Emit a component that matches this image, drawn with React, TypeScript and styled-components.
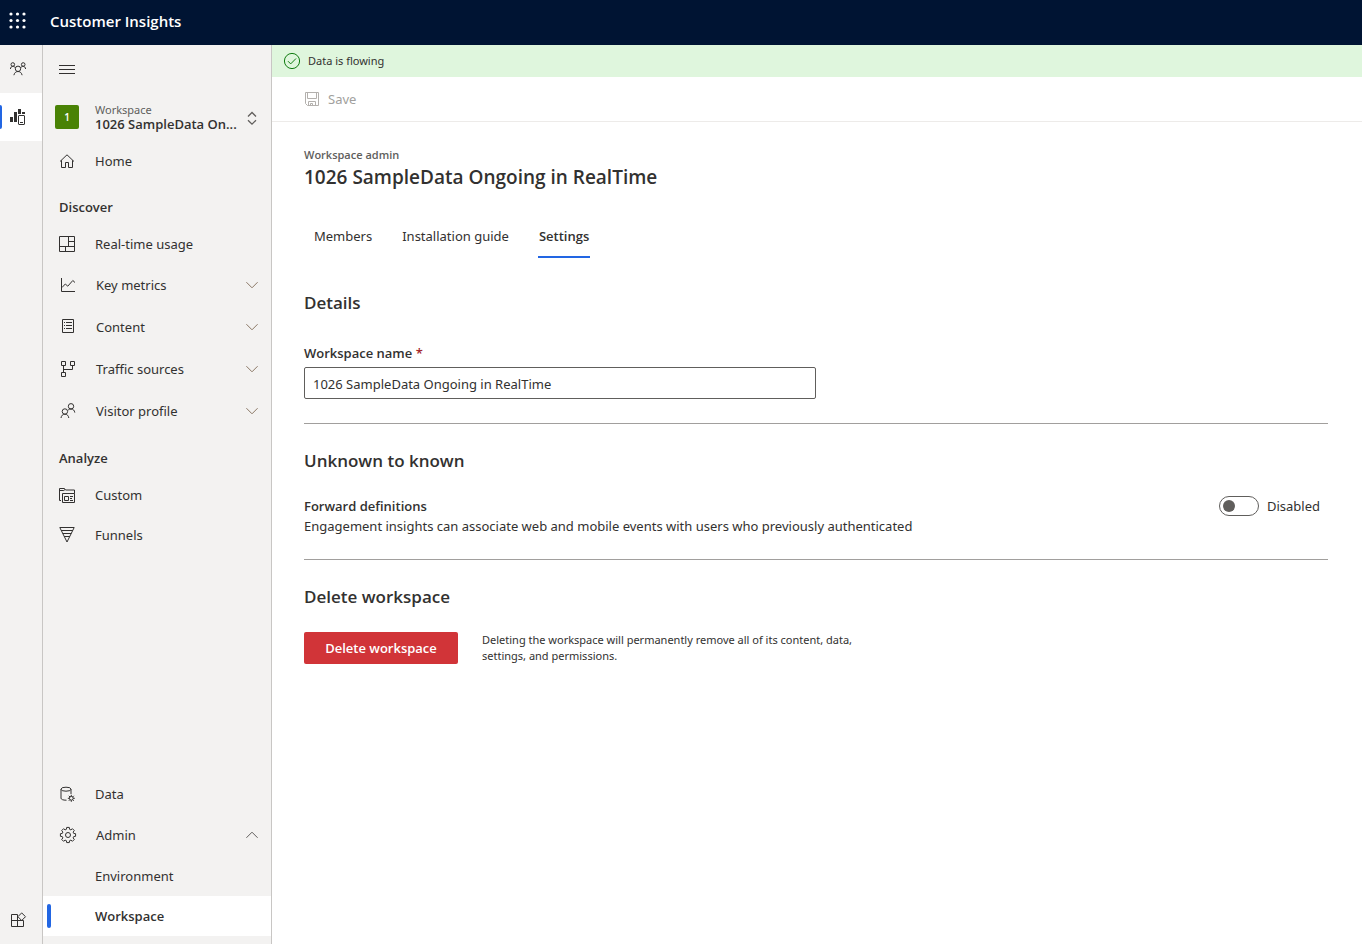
import React from "react";
import styled, { createGlobalStyle } from "styled-components";

const strongFont = `"Open Sans", "Noto Sans", sans-serif`;

const GlobalStyle = createGlobalStyle`
  *, *::before, *::after { box-sizing: border-box; }
  body {
    margin: 0;
    background: #ffffff;
    color: #323130;
    font-family: "Noto Sans", "Open Sans", sans-serif;
    font-size: 13px;
    line-height: 20px;
  }
  button, input { font: inherit; color: inherit; }
  button { border: 0; background: none; padding: 0; cursor: pointer; text-align: left; }
  a { color: inherit; text-decoration: none; }
  h1, h2, h3, p { margin: 0; }
  h1, h2, h3 { font-family: ${strongFont}; }
`;

const Page = styled.div`
  display: flex;
  flex-direction: column;
  min-height: 100vh;
`;

const Header = styled.header`
  display: flex;
  align-items: center;
  gap: 24px;
  height: 45px;
  padding: 0 10px 4px;
  background: #001433;
  color: #ffffff;
`;

const HeaderTitle = styled.span`
  font-family: ${strongFont};
  font-size: 15px;
  font-weight: 600;
`;

const IconButton = styled.button`
  display: flex;
`;

const Body = styled.div`
  display: flex;
  flex: 1;
`;

const Rail = styled.nav`
  display: flex;
  flex-direction: column;
  flex: none;
  width: 43px;
  background: #f3f2f1;
  border-right: 1px solid #c8c6c4;
`;

const RailItem = styled.a<{ $active?: boolean; $last?: boolean }>`
  position: relative;
  display: flex;
  align-items: center;
  height: 48px;
  padding-left: 10px;
  margin-top: ${(p) => (p.$last ? "auto" : "0")};
  background: ${(p) => (p.$active ? "#ffffff" : "transparent")};

  &::before {
    content: "";
    display: ${(p) => (p.$active ? "block" : "none")};
    position: absolute;
    left: 0;
    width: 2px;
    height: 24px;
    border-radius: 0 2px 2px 0;
    background: #2266e3;
  }
`;

const Sidebar = styled.nav`
  display: flex;
  flex-direction: column;
  flex: none;
  width: 229px;
  padding-bottom: 8px;
  background: #f3f2f1;
  border-right: 1px solid #c8c6c4;
`;

const MenuToggle = styled.button`
  display: flex;
  align-items: center;
  height: 48px;
  padding-left: 16px;
`;

const Switcher = styled.button`
  display: flex;
  align-items: center;
  height: 48px;
  padding: 0 14px 0 12px;
`;

const Badge = styled.span`
  display: flex;
  align-items: center;
  justify-content: center;
  flex: none;
  width: 24px;
  height: 24px;
  margin-right: 16px;
  border-radius: 2px;
  background: #498205;
  color: #ffffff;
  font-family: ${strongFont};
  font-size: 10px;
  font-weight: 600;
`;

const SwitcherText = styled.span`
  display: flex;
  flex-direction: column;
  flex: 1;
  min-width: 0;
`;

const SwitcherLabel = styled.span`
  color: #605e5c;
  font-size: 11px;
  line-height: 14px;
`;

const SwitcherName = styled.span`
  font-family: ${strongFont};
  font-weight: 600;
  line-height: 14px;
  white-space: nowrap;
`;

const SwitcherArrows = styled.span`
  display: flex;
  flex: none;
`;

const NavHeading = styled.h3`
  height: 43px;
  padding: 16px 16px 0;
  font-size: 13px;
  font-weight: 600;
`;

const NavLink = styled.a<{ $active?: boolean; $child?: boolean }>`
  position: relative;
  display: flex;
  align-items: center;
  gap: 20px;
  height: 40px;
  padding-left: ${(p) => (p.$child ? "52px" : "16px")};
  background: ${(p) => (p.$active ? "#ffffff" : "transparent")};
  font-family: ${(p) => (p.$active ? strongFont : "inherit")};
  font-weight: ${(p) => (p.$active ? 600 : 400)};

  &::before {
    content: "";
    display: ${(p) => (p.$active ? "block" : "none")};
    position: absolute;
    left: 4px;
    width: 4px;
    height: 24px;
    border-radius: 2px;
    background: #2266e3;
  }
`;

const NavGroup = styled.button`
  display: flex;
  align-items: center;
  gap: 20px;
  height: 42px;
  padding: 0 13px 0 17px;
`;

const NavText = styled.span`
  flex: 1;
`;

const NavBottom = styled.div`
  display: flex;
  flex-direction: column;
  margin-top: auto;
`;

const Main = styled.main`
  flex: 1;
  min-width: 0;
`;

const Banner = styled.div`
  display: flex;
  align-items: center;
  gap: 8px;
  height: 32px;
  padding: 0 12px;
  background: #dff6dd;
  font-size: 11px;
`;

const Toolbar = styled.div`
  display: flex;
  align-items: center;
  height: 45px;
  padding: 0 32px;
  border-bottom: 1px solid #edebe9;
`;

const SaveButton = styled.button`
  display: flex;
  align-items: center;
  gap: 8px;
  color: #a19f9d;
  cursor: default;
`;

const Content = styled.div`
  padding: 25px 34px 32px 32px;
`;

const Eyebrow = styled.p`
  color: #605e5c;
  font-family: ${strongFont};
  font-size: 11px;
  font-weight: 600;
  line-height: 16px;
`;

const Title = styled.h1`
  font-size: 19px;
  font-weight: 600;
  line-height: 28px;
`;

const Tabs = styled.div`
  display: flex;
  gap: 28px;
  margin: 23px 0 33px;
  padding-left: 9px;
`;

const Tab = styled.button<{ $active?: boolean }>`
  height: 44px;
  padding: 2px 1px 0;
  border-bottom: 2px solid ${(p) => (p.$active ? "#2266e3" : "transparent")};
  font-family: ${(p) => (p.$active ? strongFont : "inherit")};
  font-weight: ${(p) => (p.$active ? 600 : 400)};
`;

const Section = styled.section`
  & + & {
    margin-top: 23px;
    padding-top: 25px;
    border-top: 1px solid #a19f9d;
  }
`;

const SectionTitle = styled.h2`
  margin-bottom: 23px;
  font-size: 17px;
  font-weight: 600;
  line-height: 24px;
`;

const Field = styled.div`
  display: flex;
  flex-direction: column;
  gap: 4px;
  max-width: 512px;
  padding: 5px 0 1px;
`;

const FieldLabel = styled.label`
  font-family: ${strongFont};
  font-weight: 600;
`;

const Required = styled.span`
  color: #a4262c;
`;

const TextInput = styled.input`
  width: 100%;
  height: 32px;
  padding: 2px 8px 0;
  border: 1px solid #605e5c;
  border-radius: 2px;
  background: #ffffff;
`;

const SettingRow = styled.div`
  display: flex;
  align-items: flex-start;
  justify-content: space-between;
  gap: 24px;
`;

const SettingName = styled.h3`
  font-size: 13px;
  font-weight: 600;
`;

const ToggleLabel = styled.label`
  display: flex;
  align-items: center;
  gap: 8px;
  padding-right: 8px;
`;

const Toggle = styled.input`
  display: flex;
  align-items: center;
  appearance: none;
  width: 40px;
  height: 20px;
  margin: 0;
  padding: 0 3px;
  border: 1px solid #605e5c;
  border-radius: 10px;

  &::before {
    content: "";
    width: 12px;
    height: 12px;
    border-radius: 50%;
    background: #605e5c;
  }
`;

const DeleteRow = styled.div`
  display: flex;
  align-items: flex-start;
  gap: 24px;
`;

const DeleteButton = styled.button`
  flex: none;
  width: 154px;
  height: 32px;
  border-radius: 2px;
  background: #d13438;
  color: #ffffff;
  font-family: ${strongFont};
  font-weight: 600;
  text-align: center;
`;

const DeleteNote = styled.p`
  max-width: 400px;
  font-size: 11px;
  line-height: 16px;
`;

const Glyph = styled.svg`
  display: block;
  flex: none;
  overflow: visible;
`;

type IconProps = { children: React.ReactNode; w?: number; h?: number; color?: string };

function Icon({ children, w = 16, h = 16, color = "#323130" }: IconProps) {
  return (
    <Glyph width={w} height={h} viewBox={`0 0 ${w} ${h}`} fill="none" stroke={color} aria-hidden="true">
      {children}
    </Glyph>
  );
}

/* Outline of a cog with eight flat teeth. */
function cog(cx: number, cy: number, outer: number, inner: number) {
  const points: string[] = [];
  for (let i = 0; i < 8; i++) {
    const mid = (i * Math.PI) / 4;
    [[-0.27, inner], [-0.17, outer], [0.17, outer], [0.27, inner]].forEach(([d, r]) => {
      points.push(`${(cx + r * Math.cos(mid + d)).toFixed(2)} ${(cy + r * Math.sin(mid + d)).toFixed(2)}`);
    });
  }
  return `M${points.join("L")}Z`;
}

const Waffle = () => (
  <Glyph width={16} height={16} viewBox="0 0 16 16" fill="#ffffff" aria-hidden="true">
    {[1, 7.5, 14].map((y) => [1, 7.5, 14].map((x) => <circle key={`${x}-${y}`} cx={x} cy={y} r="1.6" />))}
  </Glyph>
);

const PeopleIcon = () => (
  <Icon>
    <circle cx="2.8" cy="3.5" r="1.8" />
    <circle cx="13.2" cy="3.5" r="1.8" />
    <circle cx="8" cy="7.8" r="2.7" />
    <path d="M.4 8C.6 6.300 1.600 5.300 2.800 5.300 4 5.300 4.800 5.900 5.400 6.800M15.600 8C15.400 6.300 14.400 5.300 13.200 5.300 12 5.300 11.200 5.900 10.600 6.800M3.900 14.200C4.300 12 5.800 10.500 8 10.500 10.200 10.500 11.700 12 12.100 14.200" />
  </Icon>
);

const InsightsIcon = () => (
  <Icon>
    <path d="M0 8h3v5H0zM4 3h3v10H4zM8 0h3v5H8zM12 3h3v2h-3z" fill="#323130" stroke="none" />
    <rect x="8.500" y="6.500" width="6" height="9" rx=".5" />
    <path d="M10 13.500h3" />
  </Icon>
);

const AppsIcon = () => (
  <Icon>
    <path d="M7.500 2.500h-6v12h12v-6h-12M7.500 2.500v12M11.700 .9l3.800 3.800-3.800 3.800-3.800-3.800z" />
  </Icon>
);

const MenuIcon = () => (
  <Icon>
    <path d="M0 4.500h16M0 8.500h16M0 12.500h16" />
  </Icon>
);

const UpDownIcon = () => (
  <Icon w={10} color="#605e5c">
    <path d="M1 7.500l4-4 4 4M1 11.200l4 4 4-4" strokeWidth="1.300" />
  </Icon>
);

const Chevron = ({ up }: { up?: boolean }) => (
  <Icon w={12} h={8} color={up ? "#605e5c" : "#8a7765"}>
    <path d={up ? "M.4 6.800L6 1.200l5.600 5.600" : "M.4 1.200L6 6.800l5.600-5.600"} />
  </Icon>
);

const icons = {
  home: (
    <Icon>
      <path d="M1 8.500l7-6.700 7 6.700M2.500 7.300v7.200h4v-5h3v5h4V7.300" />
    </Icon>
  ),
  usage: (
    <Icon>
      <path d="M.5 .5h15v15H.5zM.5 10.500h15M9.500 .5v10M9.500 5.500h6M6.500 10.500v5" />
    </Icon>
  ),
  metrics: (
    <Icon>
      <path d="M1.500 1v13.500H15M2 10.500L5.300 7l2.500 2.200 5-5.700 2.200 2" />
    </Icon>
  ),
  content: (
    <Icon>
      <path d="M2.500 .5h11v13h-11zM4 3.500h1M6 3.500h6M4 6.500h1M6 6.500h6M4 9.500h1M6 9.500h6" />
    </Icon>
  ),
  traffic: (
    <Icon>
      <path d="M1.500 .5h4v4h-4zM10.500 .5h4v4h-4zM1.500 11.500h4v4h-4zM3.500 4.500v7M3.500 8.500h9v-4" />
    </Icon>
  ),
  visitor: (
    <Icon>
      <circle cx="4.900" cy="8.500" r="2.700" />
      <circle cx="11" cy="3.300" r="2.700" />
      <path d="M1 15c.3-2.400 1.700-3.800 3.900-3.800S8.500 12.600 8.800 15M8.200 7C8.900 6.400 9.800 6 11 6c2.200 0 3.500 1.400 3.800 3.600" />
    </Icon>
  ),
  custom: (
    <Icon>
      <path d="M2 13.500H.5v-12h5l1 1.500h9v3.500M.5 3.500h4.300l1.200-1M3.500 6.500h12v9h-12zM5.500 9.500h4v4h-4zM11 9.500h3M11 11.500h2M11 13.500h3" />
    </Icon>
  ),
  funnel: (
    <Icon>
      <path d="M.8 .5h14.400L8 15zM2.200 3.500h11.600M3.700 6.500h8.600M5.200 9.500h5.600" />
    </Icon>
  ),
  data: (
    <Icon>
      <ellipse cx="7" cy="3.200" rx="5" ry="2" />
      <path d="M2 3.200v9c0 1.200 2.200 2 5 2h.5M12 3.200V8" />
      <circle cx="12.300" cy="12.300" r="1.900" />
      <path d="M12.300 8.800v1.600M12.300 14.200v1.600M8.800 12.300h1.600M14.200 12.300h1.600M9.800 9.800l1.200 1.200M13.600 13.600l1.200 1.200M9.800 14.800l1.200-1.200M13.600 11l1.200-1.200" />
    </Icon>
  ),
  gear: (
    <Icon>
      <path d={cog(8, 8, 7.700, 5.900)} />
      <circle cx="8" cy="8" r="2.500" />
    </Icon>
  ),
};

type IconName = keyof typeof icons;

const discover: { label: string; icon: IconName }[] = [
  { label: "Key metrics", icon: "metrics" },
  { label: "Content", icon: "content" },
  { label: "Traffic sources", icon: "traffic" },
  { label: "Visitor profile", icon: "visitor" },
];

const workspace = "1026 SampleData Ongoing in RealTime";
const shortWorkspace = `${workspace.slice(0, 18)}...`;

function NavItem({ label, icon }: { label: string; icon: IconName }) {
  return (
    <NavLink href="#">
      {icons[icon]}
      <NavText>{label}</NavText>
    </NavLink>
  );
}

function NavExpander({ label, icon, open = false }: { label: string; icon: IconName; open?: boolean }) {
  return (
    <NavGroup type="button" aria-expanded={open}>
      {icons[icon]}
      <NavText>{label}</NavText>
      <Chevron up={open} />
    </NavGroup>
  );
}

export default function App() {
  return (
    <Page>
      <GlobalStyle />
      <Header>
        <IconButton type="button" aria-label="App launcher">
          <Waffle />
        </IconButton>
        <HeaderTitle>Customer Insights</HeaderTitle>
      </Header>
      <Body>
        <Rail aria-label="Products">
          <RailItem href="#" aria-label="Audience insights">
            <PeopleIcon />
          </RailItem>
          <RailItem href="#" aria-label="Engagement insights" $active>
            <InsightsIcon />
          </RailItem>
          <RailItem href="#" aria-label="Apps" $last>
            <AppsIcon />
          </RailItem>
        </Rail>
        <Sidebar aria-label="Workspace">
          <MenuToggle type="button" aria-label="Toggle navigation">
            <MenuIcon />
          </MenuToggle>
          <Switcher type="button">
            <Badge>1</Badge>
            <SwitcherText>
              <SwitcherLabel>Workspace</SwitcherLabel>
              <SwitcherName>{shortWorkspace}</SwitcherName>
            </SwitcherText>
            <SwitcherArrows>
              <UpDownIcon />
            </SwitcherArrows>
          </Switcher>
          <NavItem label="Home" icon="home" />
          <NavHeading>Discover</NavHeading>
          <NavItem label="Real-time usage" icon="usage" />
          {discover.map((item) => (
            <NavExpander key={item.label} {...item} />
          ))}
          <NavHeading>Analyze</NavHeading>
          <NavItem label="Custom" icon="custom" />
          <NavItem label="Funnels" icon="funnel" />
          <NavBottom>
            <NavItem label="Data" icon="data" />
            <NavExpander label="Admin" icon="gear" open />
            <NavLink href="#" $child>
              Environment
            </NavLink>
            <NavLink href="#" $child $active aria-current="page">
              Workspace
            </NavLink>
          </NavBottom>
        </Sidebar>
        <Main>
          <Banner role="status">
            <Icon color="#107c10">
              <circle cx="8" cy="8" r="7.600" />
              <path d="M4 8.200l2.700 2.700 5.300-5.400" />
            </Icon>
            Data is flowing
          </Banner>
          <Toolbar>
            <SaveButton type="button" disabled>
              <Icon color="#b3b0ad">
                <path d="M1.500 1.500h13v13h-11l-2-2zM3.500 1.500v6h9v-6M4.500 14.500v-4h7v4M6.500 14.500v-2h2v2" />
              </Icon>
              Save
            </SaveButton>
          </Toolbar>
          <Content>
            <Eyebrow>Workspace admin</Eyebrow>
            <Title>{workspace}</Title>
            <Tabs role="tablist">
              <Tab type="button" role="tab" aria-selected={false}>
                Members
              </Tab>
              <Tab type="button" role="tab" aria-selected={false}>
                Installation guide
              </Tab>
              <Tab type="button" role="tab" aria-selected $active>
                Settings
              </Tab>
            </Tabs>
            <Section>
              <SectionTitle>Details</SectionTitle>
              <Field>
                <FieldLabel htmlFor="workspace-name">
                  Workspace name <Required>*</Required>
                </FieldLabel>
                <TextInput id="workspace-name" type="text" defaultValue={workspace} required />
              </Field>
            </Section>
            <Section>
              <SectionTitle>Unknown to known</SectionTitle>
              <SettingRow>
                <div>
                  <SettingName>Forward definitions</SettingName>
                  <p>Engagement insights can associate web and mobile events with users who previously authenticated</p>
                </div>
                <ToggleLabel>
                  <Toggle type="checkbox" role="switch" />
                  Disabled
                </ToggleLabel>
              </SettingRow>
            </Section>
            <Section>
              <SectionTitle>Delete workspace</SectionTitle>
              <DeleteRow>
                <DeleteButton type="button">Delete workspace</DeleteButton>
                <DeleteNote>
                  Deleting the workspace will permanently remove all of its content, data, settings, and permissions.
                </DeleteNote>
              </DeleteRow>
            </Section>
          </Content>
        </Main>
      </Body>
    </Page>
  );
}
